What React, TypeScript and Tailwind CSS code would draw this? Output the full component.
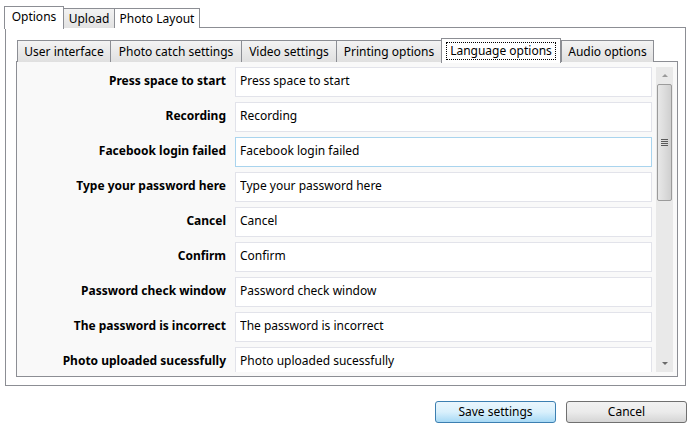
import { useState } from "react";

const outerTabs = ["Options", "Upload", "Photo Layout"];
const innerTabs = [
  { name: "User interface", w: "w-[93px]" },
  { name: "Photo catch settings", w: "w-[131px]" },
  { name: "Video settings", w: "w-[95px]" },
  { name: "Printing options", w: "w-[105px]" },
  { name: "Language options", w: "w-[120px]" },
  { name: "Audio options", w: "w-[93px]" },
];

const rows = [
  "Press space to start",
  "Recording",
  "Facebook login failed",
  "Type your password here",
  "Cancel",
  "Confirm",
  "Password check window",
  "The password is incorrect",
  "Photo uploaded sucessfully",
];

const ScrollBar = () => (
  <div className="flex flex-col w-[17px] h-[305px] bg-[#e9e9e9] mt-[5px] ml-[3px]">
    <div className="flex items-center justify-center h-[17px] shrink-0">
      <div className="w-0 h-0 border-x-[3px] border-x-transparent border-b-[3px] border-b-[#9a9a9a]" />
    </div>
    <div className="mx-[1px] h-[117px] rounded-[2px] border border-[#9b9b9b] bg-gradient-to-r from-[#e8e8e8] via-[#dcdcdc] to-[#cfcfcf] flex items-center justify-center">
      <div className="flex flex-col gap-[1px]">
        <div className="w-[7px] h-[1px] bg-[#5a5a5a]" />
        <div className="w-[7px] h-[1px] bg-[#5a5a5a]" />
        <div className="w-[7px] h-[1px] bg-[#5a5a5a]" />
        <div className="w-[7px] h-[1px] bg-[#5a5a5a]" />
      </div>
    </div>
    <div className="flex-1" />
    <div className="flex items-center justify-center h-[17px] shrink-0">
      <div className="w-0 h-0 border-x-[3px] border-x-transparent border-t-[3px] border-t-[#6a6a6a]" />
    </div>
  </div>
);

const App = () => {
  const [values, setValues] = useState(rows);

  return (
    <div
      className="w-[692px] h-[432px] bg-white text-[12px] text-black overflow-hidden"
      style={{ fontFamily: '"Noto Sans", "Open Sans", sans-serif' }}
    >
      {/* outer tabs */}
      <div className="flex items-end h-[28px] pl-[4px] relative z-10">
        {outerTabs.map((t, i) =>
          i === 0 ? (
            <div
              key={t}
              className="h-[23px] w-[60px] border border-b-0 border-[#8c8e94] bg-white flex items-center justify-center pb-[2px] -mb-[1px]"
            >
              {t}
            </div>
          ) : (
            <div
              key={t}
              className={`h-[20px] ${i === 1 ? "w-[51px]" : "w-[85px]"} border border-l-0 border-[#8c8e94] border-b-0 flex items-center justify-center ${
                i === 1 ? "bg-gradient-to-b from-[#f2f2f2] to-[#e2e2e2]" : "bg-white"
              }`}
            >
              {t}
            </div>
          )
        )}
      </div>

      {/* outer panel */}
      <div className="ml-[5px] w-[681px] h-[359px] -mt-[1px] border border-[#8c8e94] bg-white pl-[10px] pt-[9px]">
        {/* inner tabs */}
        <div className="flex items-end h-[25px] pl-[1px] relative z-10">
          {innerTabs.map((t) => {
            const active = t.name === "Language options";
            return active ? (
              <div
                key={t.name}
                className={`${t.w} h-[25px] border border-b-0 border-[#8c8e94] bg-white flex items-center justify-center -mb-[1px] pb-[1px]`}
              >
                <span className="px-[3px] border border-dotted border-black leading-[16px]">{t.name}</span>
              </div>
            ) : (
              <div
                key={t.name}
                className={`${t.w} h-[22px] border border-r-0 border-b-0 border-[#8c8e94] last:border-r bg-gradient-to-b from-[#f3f3f3] to-[#e0e0e0] flex items-center justify-center`}
              >
                {t.name}
              </div>
            );
          })}
        </div>

        {/* inner panel */}
        <div className="w-[662px] h-[316px] -mt-[1px] border border-[#8c8e94] bg-[#f9f9f9] flex">
          <div className="w-[636px] h-[310px] overflow-hidden">
            <div className="flex flex-col gap-[5px] pt-[5px]">
              {values.map((label, i) => (
                <div key={rows[i]} className="flex items-center h-[30px]">
                  <div className="w-[211px] text-right font-bold pr-[2px] -mt-[3px]">{rows[i]}</div>
                  <input
                    value={label}
                    onChange={(e) => {
                      const next = [...values];
                      next[i] = e.target.value;
                      setValues(next);
                    }}
                    className={`ml-[7px] w-[417px] h-[30px] bg-white border outline-none px-[4px] pb-[4px] ${
                      i === 2 ? "border-[#a9d4ee]" : "border-[#e2e3ea]"
                    }`}
                  />
                </div>
              ))}
            </div>
          </div>
          <ScrollBar />
        </div>
      </div>

      {/* buttons */}
      <div className="flex justify-end gap-[10px] pr-[5px] mt-[15px]">
        <button className="w-[121px] h-[22px] rounded-[3px] border border-[#3c7fb1] bg-gradient-to-b from-[#eaf6fd] via-[#d9f0fc] to-[#a7d9f5] leading-none">
          Save settings
        </button>
        <button className="w-[121px] h-[22px] rounded-[3px] border border-[#707070] bg-gradient-to-b from-[#f2f2f2] via-[#ebebeb] to-[#d5d5d5] leading-none">
          Cancel
        </button>
      </div>
    </div>
  );
};

export default App;
